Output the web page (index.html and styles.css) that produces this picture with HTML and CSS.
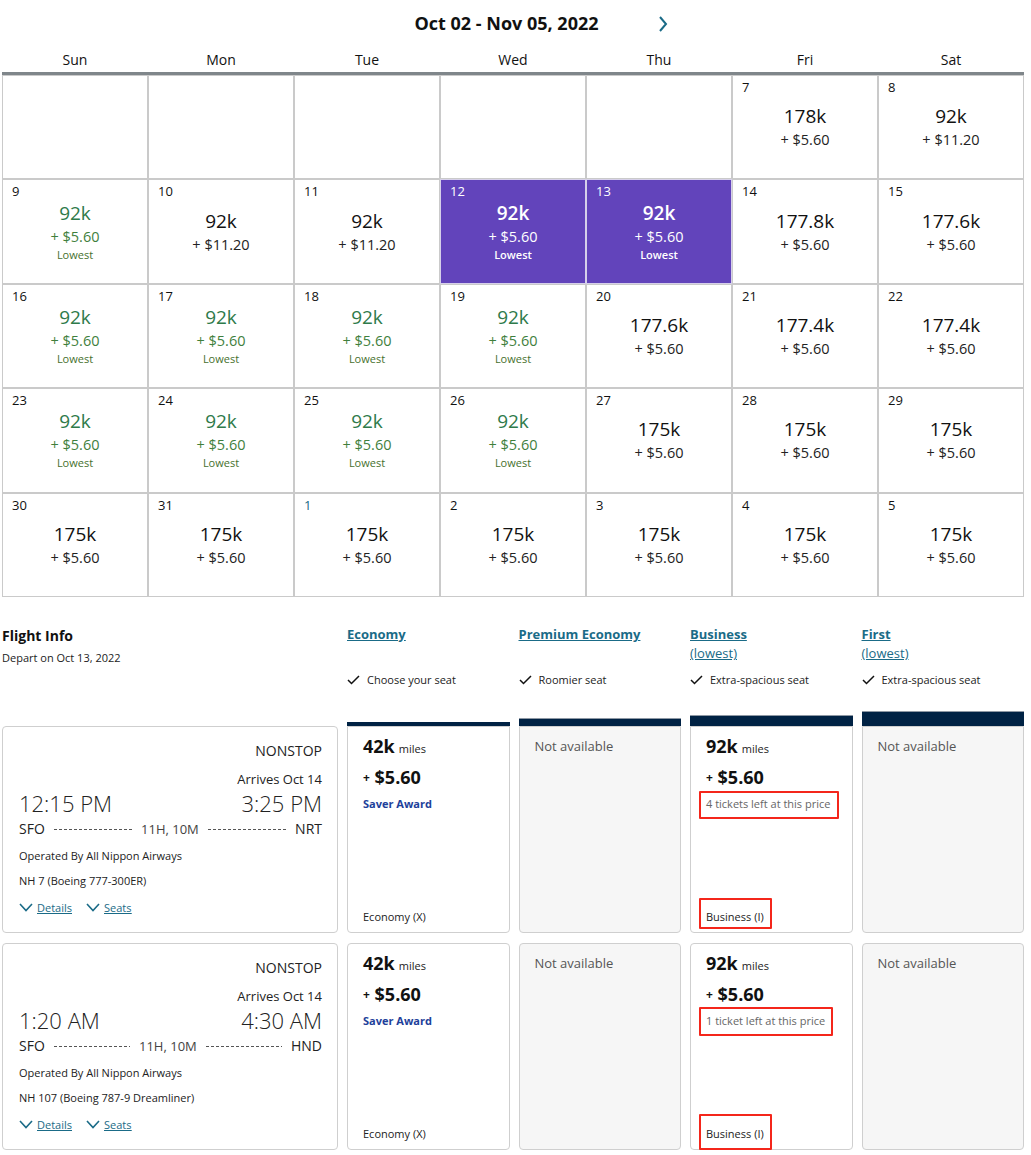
FILE: index.html
```html
<!DOCTYPE html>
<html lang="en">
<head>
<meta charset="utf-8">
<title>Award calendar</title>
<link rel="stylesheet" href="styles.css">
</head>
<body>
<div class="page">
  <div class="titlebar">
    <span class="spacer"></span>
    <h1 class="title">Oct 02 - Nov 05, 2022</h1>
    <span class="nav"><svg width="10" height="16" viewBox="0 0 10 16"><path d="M2 1 L8 8 L2 15" fill="none" stroke="#1a6b87" stroke-width="2"/></svg></span>
  </div>

  <div class="days">
    <div>Sun</div><div>Mon</div><div>Tue</div><div>Wed</div><div>Thu</div><div>Fri</div><div>Sat</div>
  </div>

  <div class="cal">
    <div class="cell"></div>
    <div class="cell"></div>
    <div class="cell"></div>
    <div class="cell"></div>
    <div class="cell"></div>
    <div class="cell"><span class="date">7</span><div class="miles">178k</div><div class="fee">+ $5.60</div></div>
    <div class="cell"><span class="date">8</span><div class="miles">92k</div><div class="fee">+ $11.20</div></div>

    <div class="cell low"><span class="date">9</span><div class="miles">92k</div><div class="fee">+ $5.60</div><div class="tag">Lowest</div></div>
    <div class="cell"><span class="date">10</span><div class="miles">92k</div><div class="fee">+ $11.20</div></div>
    <div class="cell"><span class="date">11</span><div class="miles">92k</div><div class="fee">+ $11.20</div></div>
    <div class="cell sel"><span class="date">12</span><div class="miles">92k</div><div class="fee">+ $5.60</div><div class="tag">Lowest</div></div>
    <div class="cell sel"><span class="date">13</span><div class="miles">92k</div><div class="fee">+ $5.60</div><div class="tag">Lowest</div></div>
    <div class="cell"><span class="date">14</span><div class="miles">177.8k</div><div class="fee">+ $5.60</div></div>
    <div class="cell"><span class="date">15</span><div class="miles">177.6k</div><div class="fee">+ $5.60</div></div>

    <div class="cell low"><span class="date">16</span><div class="miles">92k</div><div class="fee">+ $5.60</div><div class="tag">Lowest</div></div>
    <div class="cell low"><span class="date">17</span><div class="miles">92k</div><div class="fee">+ $5.60</div><div class="tag">Lowest</div></div>
    <div class="cell low"><span class="date">18</span><div class="miles">92k</div><div class="fee">+ $5.60</div><div class="tag">Lowest</div></div>
    <div class="cell low"><span class="date">19</span><div class="miles">92k</div><div class="fee">+ $5.60</div><div class="tag">Lowest</div></div>
    <div class="cell"><span class="date">20</span><div class="miles">177.6k</div><div class="fee">+ $5.60</div></div>
    <div class="cell"><span class="date">21</span><div class="miles">177.4k</div><div class="fee">+ $5.60</div></div>
    <div class="cell"><span class="date">22</span><div class="miles">177.4k</div><div class="fee">+ $5.60</div></div>

    <div class="cell low"><span class="date">23</span><div class="miles">92k</div><div class="fee">+ $5.60</div><div class="tag">Lowest</div></div>
    <div class="cell low"><span class="date">24</span><div class="miles">92k</div><div class="fee">+ $5.60</div><div class="tag">Lowest</div></div>
    <div class="cell low"><span class="date">25</span><div class="miles">92k</div><div class="fee">+ $5.60</div><div class="tag">Lowest</div></div>
    <div class="cell low"><span class="date">26</span><div class="miles">92k</div><div class="fee">+ $5.60</div><div class="tag">Lowest</div></div>
    <div class="cell"><span class="date">27</span><div class="miles">175k</div><div class="fee">+ $5.60</div></div>
    <div class="cell"><span class="date">28</span><div class="miles">175k</div><div class="fee">+ $5.60</div></div>
    <div class="cell"><span class="date">29</span><div class="miles">175k</div><div class="fee">+ $5.60</div></div>

    <div class="cell"><span class="date">30</span><div class="miles">175k</div><div class="fee">+ $5.60</div></div>
    <div class="cell"><span class="date">31</span><div class="miles">175k</div><div class="fee">+ $5.60</div></div>
    <div class="cell"><span class="date month">1</span><div class="miles">175k</div><div class="fee">+ $5.60</div></div>
    <div class="cell"><span class="date">2</span><div class="miles">175k</div><div class="fee">+ $5.60</div></div>
    <div class="cell"><span class="date">3</span><div class="miles">175k</div><div class="fee">+ $5.60</div></div>
    <div class="cell"><span class="date">4</span><div class="miles">175k</div><div class="fee">+ $5.60</div></div>
    <div class="cell"><span class="date">5</span><div class="miles">175k</div><div class="fee">+ $5.60</div></div>
  </div>

  <div class="flights">
    <div class="info-head">
      <div class="info-title">Flight Info</div>
      <div class="info-sub">Depart on Oct 13, 2022</div>
    </div>
    <div class="fhead">
      <a class="ftitle" href="#">Economy</a>
      <div class="fsub"></div>
      <div class="feat"><svg class="check" width="13" height="10" viewBox="0 0 13 10"><path d="M1 5 L4.5 8.5 L12 1" fill="none" stroke="#111" stroke-width="1.5"/></svg>Choose your seat</div>
      <div class="bar b1"></div>
    </div>
    <div class="fhead">
      <a class="ftitle" href="#">Premium Economy</a>
      <div class="fsub"></div>
      <div class="feat"><svg class="check" width="13" height="10" viewBox="0 0 13 10"><path d="M1 5 L4.5 8.5 L12 1" fill="none" stroke="#111" stroke-width="1.5"/></svg>Roomier seat</div>
      <div class="bar b2"></div>
    </div>
    <div class="fhead">
      <a class="ftitle" href="#">Business</a>
      <div class="fsub"><a href="#">(lowest)</a></div>
      <div class="feat"><svg class="check" width="13" height="10" viewBox="0 0 13 10"><path d="M1 5 L4.5 8.5 L12 1" fill="none" stroke="#111" stroke-width="1.5"/></svg>Extra-spacious seat</div>
      <div class="bar b3"></div>
    </div>
    <div class="fhead">
      <a class="ftitle" href="#">First</a>
      <div class="fsub"><a href="#">(lowest)</a></div>
      <div class="feat"><svg class="check" width="13" height="10" viewBox="0 0 13 10"><path d="M1 5 L4.5 8.5 L12 1" fill="none" stroke="#111" stroke-width="1.5"/></svg>Extra-spacious seat</div>
      <div class="bar b4"></div>
    </div>

    <!-- Flight 1 -->
    <div class="fcard">
      <div class="stops">NONSTOP</div>
      <div class="arrives">Arrives Oct 14</div>
      <div class="times"><span>12:15 PM</span><span>3:25 PM</span></div>
      <div class="route"><span>SFO</span><span class="dash"></span><span class="dur">11H, 10M</span><span class="dash"></span><span>NRT</span></div>
      <div class="line">Operated By All Nippon Airways</div>
      <div class="line">NH 7 (Boeing 777-300ER)</div>
      <div class="links">
        <a href="#"><svg width="14" height="9" viewBox="0 0 14 9"><path d="M1 1 L7 7.5 L13 1" fill="none" stroke="#1a6b87" stroke-width="1.6"/></svg><span>Details</span></a>
        <a href="#"><svg width="14" height="9" viewBox="0 0 14 9"><path d="M1 1 L7 7.5 L13 1" fill="none" stroke="#1a6b87" stroke-width="1.6"/></svg><span>Seats</span></a>
      </div>
    </div>
    <div class="fare top">
      <div class="fmiles"><b>42k</b><span>miles</span></div>
      <div class="ffee"><small>+</small> $5.60</div>
      <div class="saver">Saver Award</div>
      <div class="fclass">Economy (X)</div>
    </div>
    <div class="fare top na">Not available</div>
    <div class="fare top">
      <div class="fmiles"><b>92k</b><span>miles</span></div>
      <div class="ffee"><small>+</small> $5.60</div>
      <div class="left"><span class="mark m1">4 tickets left at this price</span></div>
      <div class="fclass"><span class="mark m2">Business (I)</span></div>
    </div>
    <div class="fare top na">Not available</div>

    <!-- Flight 2 -->
    <div class="fcard second">
      <div class="stops">NONSTOP</div>
      <div class="arrives">Arrives Oct 14</div>
      <div class="times"><span>1:20 AM</span><span>4:30 AM</span></div>
      <div class="route"><span>SFO</span><span class="dash"></span><span class="dur">11H, 10M</span><span class="dash"></span><span>HND</span></div>
      <div class="line">Operated By All Nippon Airways</div>
      <div class="line">NH 107 (Boeing 787-9 Dreamliner)</div>
      <div class="links">
        <a href="#"><svg width="14" height="9" viewBox="0 0 14 9"><path d="M1 1 L7 7.5 L13 1" fill="none" stroke="#1a6b87" stroke-width="1.6"/></svg><span>Details</span></a>
        <a href="#"><svg width="14" height="9" viewBox="0 0 14 9"><path d="M1 1 L7 7.5 L13 1" fill="none" stroke="#1a6b87" stroke-width="1.6"/></svg><span>Seats</span></a>
      </div>
    </div>
    <div class="fare second">
      <div class="fmiles"><b>42k</b><span>miles</span></div>
      <div class="ffee"><small>+</small> $5.60</div>
      <div class="saver">Saver Award</div>
      <div class="fclass">Economy (X)</div>
    </div>
    <div class="fare second na">Not available</div>
    <div class="fare second">
      <div class="fmiles"><b>92k</b><span>miles</span></div>
      <div class="ffee"><small>+</small> $5.60</div>
      <div class="left"><span class="mark m1 m1b">1 ticket left at this price</span></div>
      <div class="fclass"><span class="mark m2 m2b">Business (I)</span></div>
    </div>
    <div class="fare second na">Not available</div>
  </div>
</div>
</body>
</html>
```

FILE: styles.css
```css
* { box-sizing: border-box; }
html, body { margin: 0; padding: 0; background: #fff; }
body {
  font-family: "Open Sans", "Noto Sans", "DejaVu Sans", sans-serif;
  color: #111;
  width: 1031px;
}
a { color: #1a6b87; }
.page { padding-left: 2px; width: 1024px; }

.titlebar {
  height: 46px;
  display: flex;
  justify-content: center;
  align-items: center;
}
.spacer { width: 56px; height: 1px; }
.title {
  margin: 0;
  font-size: 18px;
  font-weight: 700;
  color: #111;
  line-height: 24px;
}
.nav { display: flex; width: 10px; height: 16px; margin-top: 1px; margin-left: 59px; }

.days {
  display: grid;
  grid-template-columns: repeat(7, 146px);
  height: 29px;
  border-bottom: 3px solid #7f868a;
  font-size: 14px;
  text-align: center;
  line-height: 28px;
  color: #111;
}

.cal {
  display: grid;
  grid-template-columns: repeat(7, 146px);
  grid-auto-rows: 104.4px;
}
.cell {
  position: relative;
  border: 1px solid #cacaca;
  display: flex;
  flex-direction: column;
  align-items: center;
  justify-content: center;
  color: #111;
}
.date {
  position: absolute;
  top: 2px;
  left: 9px;
  font-size: 13px;
  line-height: 18px;
}
.date.month { color: #1a6b87; }
.miles { font-size: 19px; line-height: 25px; }
.fee { font-size: 14.5px; line-height: 21px; color: #222; }
.tag { font-size: 11px; line-height: 16px; }
.cell.low .miles { color: #2e7a4a; }
.cell.low .fee { color: #3f7f3d; }
.cell.low .tag { color: #46702e; }
.cell.sel { background: #6244bb; color: #fff; border-color: #d6d0ea; }
.cell.sel .fee, .cell.sel .tag { color: #fff; }
.cell.sel .miles { font-weight: 600; }
.cell.sel .tag { font-weight: 600; }

.flights {
  margin-top: 28px;
  display: grid;
  grid-template-columns: 336px repeat(4, 1fr);
  column-gap: 9px;
  width: 1022px;
}
.info-head { padding-top: 1px; }
.info-title { font-size: 14px; font-weight: 700; line-height: 20px; color: #111; }
.info-sub { margin-top: 4px; font-size: 11px; line-height: 16px; color: #222; }

.fhead {
  height: 101px;
  display: flex;
  flex-direction: column;
}
.ftitle {
  font-size: 13px;
  font-weight: 700;
  line-height: 18px;
  align-self: flex-start;
}
.fsub { height: 19px; font-size: 13px; line-height: 20px; }
.feat {
  margin-top: 10px;
  display: flex;
  align-items: center;
  gap: 7px;
  font-size: 11px;
  line-height: 16px;
  color: #222;
}
.check { flex: none; }
.bar {
  margin-top: auto;
  background: #002244;
  border-top: 1px solid #8e98a4;
}
.b1 { height: 4px; border-top: 0; }
.b2 { height: 8px; }
.b3 { height: 11px; }
.b4 { height: 15px; }

.fcard {
  border: 1px solid #cfcfcf;
  border-radius: 4px;
  padding: 14px 15px 16px 16px;
  color: #222;
}
.fcard.second, .fare.second { margin-top: 10px; }
.stops { text-align: right; font-size: 14px; line-height: 20px; }
.arrives { text-align: right; font-size: 13px; line-height: 18px; margin-top: 9px; }
.times {
  display: flex;
  justify-content: space-between;
  font-size: 22px;
  font-weight: 300;
  line-height: 28px;
  margin-top: 1px;
  color: #222;
}
.route {
  margin-top: 2px;
  display: flex;
  align-items: center;
  gap: 9px;
  font-size: 14px;
  line-height: 20px;
}
.dash {
  flex: 1;
  height: 1px;
  background: repeating-linear-gradient(to right, #555 0 3px, transparent 3px 5px);
  margin-top: 1px;
}
.dur { font-size: 13px; color: #444; }
.line { font-size: 11px; line-height: 16px; margin-top: 9px; }
.links { margin-top: 11px; display: flex; gap: 14px; font-size: 11px; line-height: 16px; }
.links a { display: flex; align-items: center; gap: 4px; }
.links a span { text-decoration: underline; }

.fare {
  border: 1px solid #cfcfcf;
  border-radius: 0 0 4px 4px;
  padding: 7px 15px 7px 15px;
  display: flex;
  flex-direction: column;
  color: #111;
}
.fare.second { border-radius: 4px; }
.fare.na {
  padding-top: 9px;
  background: #f6f6f6;
  font-size: 13px;
  line-height: 20px;
  color: #555;
}
.fmiles { line-height: 24px; }
.fmiles b { font-size: 18px; font-weight: 700; }
.fmiles span { font-size: 11px; margin-left: 4px; color: #222; }
.ffee { margin-top: 4px; line-height: 24px; font-size: 18px; font-weight: 700; }
.ffee small { font-size: 12px; font-weight: 700; vertical-align: 2px; }
.saver { margin-top: 6px; font-size: 11px; line-height: 16px; font-weight: 700; color: #21409a; }
.left { margin-top: 6px; font-size: 11px; line-height: 16px; color: #666; }
.fclass { margin-top: auto; font-size: 11px; line-height: 16px; color: #222; }
.mark { position: relative; display: inline-block; }
.mark::after {
  content: "";
  position: absolute;
  border: 2px solid #f4261b;
  border-radius: 1px;
}
.m1::after { left: -7px; right: -9px; top: -5px; bottom: -7px; }
.m1b::after { right: -8px; top: -6px; bottom: -7px; }
.m2::after { left: -7px; right: -8px; top: -11px; bottom: -4px; }
.m2b::after { top: -12px; bottom: -8px; }
```
